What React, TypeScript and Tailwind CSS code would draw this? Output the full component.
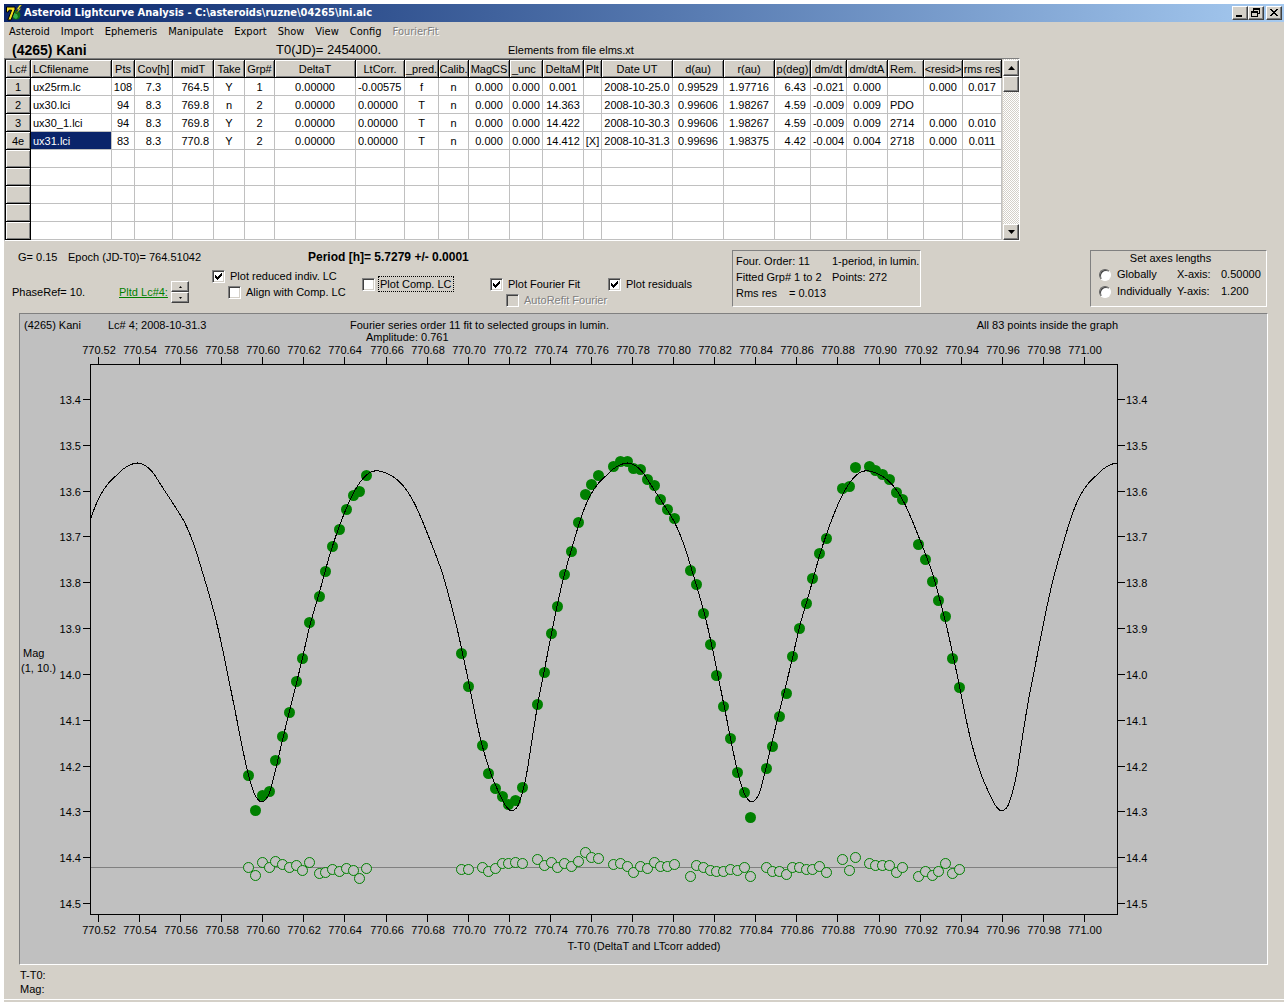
import type { ReactNode } from "react";

type Align = "left" | "center" | "right";

const alignClass: Record<Align, string> = {
  left: "text-left pl-0.5",
  center: "text-center",
  right: "text-right pr-1",
};

const columns: { title: string; width: number; align: Align; head?: Align }[] = [
  { title: "LCfilename", width: 81, align: "left" },
  { title: "Pts", width: 23, align: "center" },
  { title: "Cov[h]", width: 38, align: "center" },
  { title: "midT", width: 41, align: "right", head: "center" },
  { title: "Take", width: 31, align: "center" },
  { title: "Grp#", width: 30, align: "center" },
  { title: "DeltaT", width: 81, align: "center" },
  { title: "LtCorr.", width: 49, align: "left", head: "center" },
  { title: "_pred.", width: 34, align: "center" },
  { title: "Calib.", width: 30, align: "center" },
  { title: "MagCS", width: 41, align: "center" },
  { title: "_unc", width: 33, align: "center", head: "left" },
  { title: "DeltaM", width: 41, align: "center" },
  { title: "Plt", width: 18, align: "center" },
  { title: "Date UT", width: 71, align: "center" },
  { title: "d(au)", width: 51, align: "center" },
  { title: "r(au)", width: 51, align: "center" },
  { title: "p(deg)", width: 36, align: "right", head: "center" },
  { title: "dm/dt", width: 36, align: "center" },
  { title: "dm/dtA", width: 41, align: "center" },
  { title: "Rem.", width: 36, align: "left" },
  { title: "<resid>", width: 39, align: "center" },
  { title: "rms res", width: 39, align: "center" },
];

const rows: { id: string; cells: string[] }[] = [
  {
    id: "1",
    cells: ["ux25rm.lc", "108", "7.3", "764.5", "Y", "1", "0.00000", "-0.00575", "f", "n", "0.000", "0.000", "0.001", "", "2008-10-25.0", "0.99529", "1.97716", "6.43", "-0.021", "0.000", "", "0.000", "0.017"],
  },
  {
    id: "2",
    cells: ["ux30.lci", "94", "8.3", "769.8", "n", "2", "0.00000", "0.00000", "T", "n", "0.000", "0.000", "14.363", "", "2008-10-30.3", "0.99606", "1.98267", "4.59", "-0.009", "0.009", "PDO", "", ""],
  },
  {
    id: "3",
    cells: ["ux30_1.lci", "94", "8.3", "769.8", "Y", "2", "0.00000", "0.00000", "T", "n", "0.000", "0.000", "14.422", "", "2008-10-30.3", "0.99606", "1.98267", "4.59", "-0.009", "0.009", "2714", "0.000", "0.010"],
  },
  {
    id: "4e",
    cells: ["ux31.lci", "83", "8.3", "770.8", "Y", "2", "0.00000", "0.00000", "T", "n", "0.000", "0.000", "14.412", "[X]", "2008-10-31.3", "0.99696", "1.98375", "4.42", "-0.004", "0.004", "2718", "0.000", "0.011"],
  },
  { id: "", cells: [] },
  { id: "", cells: [] },
  { id: "", cells: [] },
  { id: "", cells: [] },
  { id: "", cells: [] },
];

const selectedRow = 3;

// x, magnitude y, residual y
const points = [
  [248, 775, 867], [255, 810, 875], [262, 795, 862], [269, 791, 867], [275, 760, 861],
  [282, 736, 864], [289, 712, 867], [296, 681, 865], [302, 658, 870], [309, 622, 862],
  [319, 596, 873], [325, 571, 872], [332, 546, 869], [339, 529, 871], [346, 509, 868],
  [353, 495, 870], [359, 491, 878], [366, 475, 868], [461, 653, 869], [468, 686, 869],
  [482, 745, 867], [488, 773, 871], [495, 788, 868], [502, 796, 863], [508, 804, 863],
  [515, 800, 862], [522, 787, 863], [537, 704, 859], [544, 672, 865], [551, 633, 862],
  [557, 606, 867], [564, 574, 863], [571, 551, 866], [578, 522, 861], [585, 494, 852],
  [591, 484, 857], [598, 475, 858], [613, 466, 864], [620, 461, 863], [627, 461, 866],
  [633, 468, 872], [640, 469, 866], [647, 479, 868], [654, 485, 862], [660, 499, 866],
  [667, 509, 866], [674, 518, 864], [690, 570, 876], [696, 584, 865], [703, 613, 867],
  [710, 644, 870], [716, 675, 871], [723, 706, 871], [730, 738, 869], [737, 772, 870],
  [744, 792, 867], [750, 817, 876], [766, 768, 867], [772, 746, 871], [779, 716, 871],
  [786, 693, 874], [792, 656, 867], [799, 628, 867], [806, 603, 869], [812, 578, 869],
  [819, 553, 866], [826, 538, 872], [842, 488, 859], [849, 486, 870], [855, 467, 857],
  [869, 466, 863], [875, 470, 865], [882, 474, 865], [889, 479, 865], [896, 492, 872],
  [902, 499, 867], [918, 544, 876], [925, 559, 871], [932, 581, 875], [938, 600, 871],
  [945, 616, 863], [952, 658, 873], [959, 687, 869],
];

// one rotation of the Fourier fit, repeated every PERIOD
const PERIOD = 490;
const fit = [
  [261, 802], [266, 799], [270, 790], [275, 770], [282, 739], [289, 711], [296, 682],
  [302, 658], [309, 625], [319, 592], [325, 569], [332, 545], [339, 525], [346, 507],
  [353, 492], [359, 482], [366, 474], [371, 471], [377, 470], [385, 472], [393, 476],
  [402, 484], [410, 495], [418, 511], [427, 533], [441, 569], [448, 594], [457, 629],
  [462, 653], [469, 685], [475, 717], [482, 747], [489, 770], [495, 785], [503, 802],
  [507, 808], [511, 811], [516, 808], [519, 802], [523, 788], [526, 775], [530, 749],
  [534, 723], [538, 699], [544, 669], [551, 633], [557, 603], [564, 573], [571, 549],
  [579, 521], [588, 497], [598, 482], [607, 474], [613, 468], [620, 464], [627, 462],
  [634, 464], [642, 471], [647, 479], [654, 490], [660, 499], [667, 510], [674, 521],
  [683, 542], [690, 565], [696, 585], [704, 613], [711, 643], [717, 673], [724, 707],
  [730, 738], [737, 772], [743, 792], [747, 799],
];

function fitPath() {
  const all = [-PERIOD, 0, PERIOD].flatMap((dx) => fit.map(([x, y]) => [x + dx + 0.5, y + 0.5]));
  let d = `M${all[0][0]} ${all[0][1]}`;
  for (let i = 1; i < all.length - 1; i++) {
    const [x, y] = all[i];
    const [nx, ny] = all[i + 1];
    d += ` Q${x} ${y} ${(x + nx) / 2} ${(y + ny) / 2}`;
  }
  return d;
}

const xTicks = Array.from({ length: 25 }, (_, i) => ({
  x: Math.round(98 + i * 41.08) + 0.5,
  label: (770.52 + i * 0.02).toFixed(2),
}));

const yTicks = Array.from({ length: 12 }, (_, i) => ({
  y: Math.round(399 + i * 45.82) + 0.5,
  label: (13.4 + i * 0.1).toFixed(1),
}));

const menu = ["Asteroid", "Import", "Ephemeris", "Manipulate", "Export", "Show", "View", "Config"];

const raised =
  "border border-t-white border-l-white border-r-[#404040] border-b-[#404040] bg-[#d4d0c8] shadow-[inset_-1px_-1px_0_#808080]";

function DelphiIcon() {
  return (
    <svg width="16" height="16" viewBox="0 0 16 16" aria-hidden="true">
      <circle cx="10" cy="10" r="4.5" fill="#107018" />
      <path d="M8 8l3 1 1 3-2 2-3-2z" fill="#38b048" />
      <path d="M0.5 2h8.5v2.5L5 15H1.8L5.6 5.2H3L2.4 7H0.5z" fill="#f4e020" stroke="#000" strokeWidth="1" />
      <path d="M13.5 0l-3 4.5h2L10 9l5-5.5h-2L16 0z" fill="#f8f040" stroke="#404000" strokeWidth="0.5" />
    </svg>
  );
}

function CaptionButton({ label, children }: { label: string; children: ReactNode }) {
  return (
    <button aria-label={label} className={`h-3.5 w-4 ${raised}`}>
      <svg width="14" height="12" viewBox="0 0 14 12" shapeRendering="crispEdges" fill="none" stroke="#000">
        {children}
      </svg>
    </button>
  );
}

function TitleBar() {
  return (
    <header className="flex h-[18px] items-center bg-linear-to-r from-[#0a246a] to-[#a6caf0] px-0.5">
      <DelphiIcon />
      <h1 className="ml-0.5 flex-1 font-['DejaVu_Sans_Condensed','DejaVu_Sans',sans-serif] text-[11px] leading-4 font-bold whitespace-nowrap text-white">
        Asteroid Lightcurve Analysis - C:\asteroids\ruzne\04265\ini.alc
      </h1>
      <CaptionButton label="Minimize">
        <path d="M3 9h6" strokeWidth="2" />
      </CaptionButton>
      <CaptionButton label="Restore">
        <path d="M4.5 1v3M4 1.5h7M4 2.5h7M10.5 1v6M8 6.5h3M2 4.5h7M2 5.5h7M2.5 4v6M8.5 4v6M2 9.5h7" />
      </CaptionButton>
      <div className="w-0.5" />
      <CaptionButton label="Close">
        <path d="M3 2h2v1h1v1h2v-1h1v-1h2v1h-1v1h-1v1h-1v1h1v1h1v1h1v1h-2v-1h-1v-1h-2v1h-1v1h-2v-1h1v-1h1v-1h1v-1h-1v-1h-1v-1h-1z" fill="#000" stroke="none" />
      </CaptionButton>
    </header>
  );
}

function MenuBar() {
  return (
    <nav className="flex h-[19px] items-center gap-[11px] px-[5px] font-['DejaVu_Sans_Condensed','DejaVu_Sans',sans-serif]">
      {menu.map((item) => (
        <button key={item}>{item}</button>
      ))}
      <button disabled className="text-[#808080] [text-shadow:1px_1px_0_#fff]">
        FourierFit
      </button>
    </nav>
  );
}

function Arrow({ up = false, small = false }: { up?: boolean; small?: boolean }) {
  return (
    <svg
      width={small ? 3 : 7}
      height={small ? 2 : 4}
      viewBox="0 0 7 4"
      preserveAspectRatio="none"
      aria-hidden="true"
    >
      <path d={up ? "M0 4h7L3.5 0z" : "M0 0h7L3.5 4z"} />
    </svg>
  );
}

function LightcurveTable() {
  return (
    <div className="flex w-max border border-t-[#808080] border-r-white border-b-white border-l-[#808080]">
      <div className="border-t border-l border-black border-t-[#404040]">
        <table className="table-fixed border-separate border-spacing-0 bg-white">
          <colgroup>
            <col style={{ width: 25 }} />
            {columns.map((c) => (
              <col key={c.title} style={{ width: c.width }} />
            ))}
          </colgroup>
          <thead>
            <tr className="h-[18px]">
              {[{ title: "Lc#", align: "center" as Align, head: undefined }, ...columns].map((c) => (
                <th
                  key={c.title}
                  className={`overflow-hidden border-r border-b border-black bg-[#d4d0c8] p-0 font-normal whitespace-nowrap shadow-[inset_1px_1px_0_#fff,inset_-1px_-1px_0_#808080] ${alignClass[c.head ?? c.align]}`}
                >
                  {c.title}
                </th>
              ))}
            </tr>
          </thead>
          <tbody>
            {rows.map((row, r) => (
              <tr key={r} className="h-[18px]">
                <th className="border-r border-b border-black bg-[#d4d0c8] p-0 font-normal shadow-[inset_1px_1px_0_#fff,inset_-1px_-1px_0_#808080]">
                  {row.id}
                </th>
                {columns.map((c, i) => (
                  <td
                    key={c.title}
                    className={`border-r border-b border-[#c0c0c0] p-0 whitespace-nowrap ${alignClass[c.align]} ${
                      r === selectedRow && i === 0 ? "bg-[#0a246a] text-white" : ""
                    }`}
                  >
                    {row.cells[i]}
                  </td>
                ))}
              </tr>
            ))}
          </tbody>
        </table>
      </div>
      <div className="ml-px flex w-4 flex-col bg-[repeating-conic-gradient(#fff_0_25%,#d4d0c8_0_50%)] bg-size-[2px_2px] pt-px">
        <button aria-label="Scroll up" className={`flex h-4 items-center justify-center ${raised}`}>
          <Arrow up />
        </button>
        <div className={`h-4 ${raised}`} />
        <button aria-label="Scroll down" className={`mt-auto flex h-4 items-center justify-center ${raised}`}>
          <Arrow />
        </button>
      </div>
    </div>
  );
}

type CheckProps = {
  label: string;
  checked?: boolean;
  disabled?: boolean;
  focused?: boolean;
  indent?: boolean;
};

function Check({ label, checked, disabled, focused, indent }: CheckProps) {
  return (
    <label className={`flex h-4 items-center gap-1 whitespace-nowrap ${indent ? "ml-4" : ""}`}>
      <span className="grid size-[13px] place-items-center">
        <input
          type="checkbox"
          defaultChecked={checked}
          disabled={disabled}
          className="peer col-start-1 row-start-1 size-[13px] appearance-none border border-t-[#808080] border-r-white border-b-white border-l-[#808080] bg-white shadow-[inset_1px_1px_0_#404040,inset_-1px_-1px_0_#d4d0c8] disabled:bg-[#d4d0c8]"
        />
        <svg
          width="7"
          height="7"
          viewBox="0 0 7 7"
          shapeRendering="crispEdges"
          className="pointer-events-none col-start-1 row-start-1 hidden peer-checked:block"
        >
          <path d="M0 2h1v1h1v1h1v-1h1v-1h1v-1h1v-1h1v3h-1v1h-1v1h-1v1h-1v1h-1v-1h-1v-1h-1z" />
        </svg>
      </span>
      <span
        className={`px-px leading-[14px] ${focused ? "outline-1 outline-black outline-dotted" : ""} ${
          disabled ? "text-[#808080] [text-shadow:1px_1px_0_#fff]" : ""
        }`}
      >
        {label}
      </span>
    </label>
  );
}

function AxisRadio({ label }: { label: string }) {
  return (
    <label className="flex items-center gap-1.5">
      <input
        type="radio"
        name="axes"
        className="size-3 appearance-none rounded-full border border-t-[#606060] border-r-white border-b-white border-l-[#606060] bg-white shadow-[inset_1px_1px_0_#404040] checked:bg-black"
      />
      {label}
    </label>
  );
}

function Controls() {
  return (
    <section className="flex h-[72px] pr-[17px]">
      <div className="w-[728px] shrink-0 pt-2">
        <div className="flex h-4 items-center pl-3.5 whitespace-nowrap">
          <span className="w-[50px]">G= 0.15</span>
          <span className="w-60">Epoch (JD-T0)= 764.51042</span>
          <b className="text-[12px]">Period [h]= 5.7279 +/- 0.0001</b>
        </div>
        <div className="flex items-start pl-2">
          <div className="flex w-[200px] items-center pt-4">
            <span className="w-[107px]">PhaseRef= 10.</span>
            <a href="#lc4" className="w-[52px] text-[#008000] underline">
              Pltd Lc#4:
            </a>
            <div className="flex w-[18px] flex-col">
              <button aria-label="Next curve" className={`flex h-[11px] items-center justify-center ${raised}`}>
                <Arrow up small />
              </button>
              <button aria-label="Previous curve" className={`flex h-[11px] items-center justify-center ${raised}`}>
                <Arrow small />
              </button>
            </div>
          </div>
          <div className="w-[150px] pt-[3px]">
            <Check label="Plot reduced indiv. LC" checked />
            <Check label="Align with Comp. LC" indent />
          </div>
          <div className="w-32 pt-[11px]">
            <Check label="Plot Comp. LC" focused />
          </div>
          <div className="w-[118px] pt-[11px]">
            <Check label="Plot Fourier Fit" checked />
            <Check label="AutoRefit Fourier" disabled indent />
          </div>
          <div className="pt-[11px]">
            <Check label="Plot residuals" checked />
          </div>
        </div>
      </div>

      <div className="mt-[9px] h-[57px] w-[189px] shrink-0 border border-t-[#808080] border-r-white border-b-white border-l-[#808080] pt-0.5 pl-[3px] leading-4 whitespace-nowrap">
        <div className="flex">
          <span className="w-24">Four. Order: 11</span>
          <span>1-period, in lumin.</span>
        </div>
        <div className="flex">
          <span className="w-24">Fitted Grp# 1 to 2</span>
          <span>Points: 272</span>
        </div>
        <div className="flex">
          <span className="w-[53px]">Rms res</span>
          <span>= 0.013</span>
        </div>
      </div>

      <fieldset className="mt-[9px] ml-auto h-[57px] w-[177px] shrink-0 border border-t-[#808080] border-r-white border-b-white border-l-[#808080] pl-2 leading-[17px] whitespace-nowrap">
        <div className="pr-6 text-center leading-[15px]">Set axes lengths</div>
        <div className="flex">
          <div className="w-[78px]">
            <AxisRadio label="Globally" />
            <AxisRadio label="Individually" />
          </div>
          <div className="w-11">
            <div>X-axis:</div>
            <div>Y-axis:</div>
          </div>
          <div>
            <div>0.50000</div>
            <div>1.200</div>
          </div>
        </div>
      </fieldset>
    </section>
  );
}

function LightcurveChart() {
  return (
    <section className="mr-4 ml-[15px] border border-t-[#808080] border-r-white border-b-white border-l-[#808080] bg-[#c0c0c0]">
      <svg viewBox="20 314 1247 650" className="block w-full" fontSize="11">
        <clipPath id="plot">
          <rect x="90" y="364" width="1027" height="550" />
        </clipPath>

        <text x="24" y="329">(4265) Kani</text>
        <text x="108" y="329">Lc# 4; 2008-10-31.3</text>
        <text x="350" y="329">Fourier series order 11 fit to selected groups in lumin.</text>
        <text x="366" y="341">Amplitude: 0.761</text>
        <text x="1118" y="329" textAnchor="end">All 83 points inside the graph</text>
        <text x="23" y="657">Mag</text>
        <text x="21" y="672">(1, 10.)</text>
        <text x="644" y="950" textAnchor="middle">T-T0 (DeltaT and LTcorr added)</text>

        {xTicks.map((t) => (
          <g key={t.label} textAnchor="middle">
            <text x={t.x + 0.5} y="354">{t.label}</text>
            <text x={t.x + 0.5} y="934">{t.label}</text>
            <path d={`M${t.x} 357v7M${t.x} 915v7`} stroke="#000" />
          </g>
        ))}
        {yTicks.map((t) => (
          <g key={t.label}>
            <text x="81" y={t.y + 4} textAnchor="end">{t.label}</text>
            <text x="1126" y={t.y + 4}>{t.label}</text>
            <path d={`M83 ${t.y}h7M1118 ${t.y}h7`} stroke="#000" />
          </g>
        ))}
        <rect x="90.5" y="364.5" width="1027" height="550" fill="none" stroke="#000" />

        <path d="M91 867.5h1026" stroke="#808080" />
        {points.map(([x, , res]) => (
          <circle key={x} cx={x + 0.5} cy={res + 0.5} r="5" fill="#c0c0c0" stroke="#008000" />
        ))}
        {points.map(([x, mag]) => (
          <circle key={x} cx={x + 0.5} cy={mag + 0.5} r="5.5" fill="#008000" />
        ))}
        <path d={fitPath()} clipPath="url(#plot)" fill="none" stroke="#000" shapeRendering="crispEdges" />
      </svg>
    </section>
  );
}

export default function App() {
  return (
    <div className="min-h-screen bg-white px-1 pt-1 font-['Liberation_Sans',Arial,sans-serif] text-[11px] leading-[14px] text-black">
      <main className="min-h-[998px] bg-[#d4d0c8]">
        <TitleBar />
        <MenuBar />
        <div className="flex h-[17px] items-center pl-2 whitespace-nowrap">
          <h2 className="w-[264px] text-sm font-bold">(4265) Kani</h2>
          <span className="w-[232px] text-[13px]">T0(JD)= 2454000.</span>
          <span>Elements from file elms.xt</span>
        </div>
        <LightcurveTable />
        <Controls />
        <LightcurveChart />
        <footer className="border-b border-white pt-[3px] pb-[3px] pl-4">
          <div>T-T0:</div>
          <div>Mag:</div>
        </footer>
      </main>
    </div>
  );
}
